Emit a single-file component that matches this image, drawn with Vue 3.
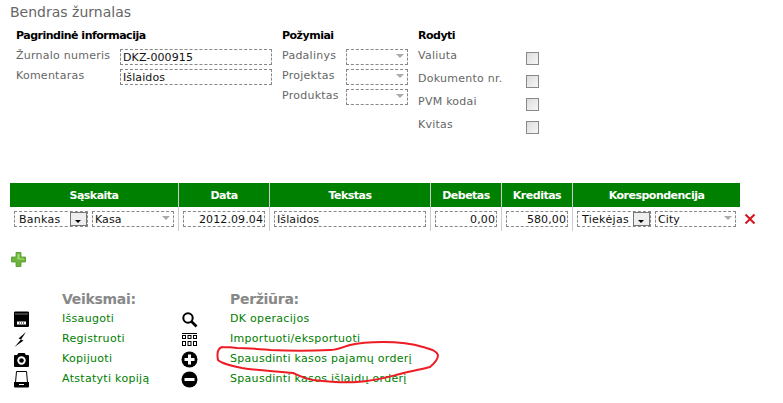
<template>
  <div class="page">
    <h1 class="title">Bendras žurnalas</h1>

    <div class="filters">
      <section class="group main-info">
        <h3>Pagrindinė informacija</h3>
        <div v-for="f in mainFields" :key="f.label" class="field">
          <label>{{ f.label }}</label>
          <div class="inp wide">{{ f.value }}</div>
        </div>
      </section>

      <section class="group attrs">
        <h3>Požymiai</h3>
        <div v-for="a in attrs" :key="a" class="field">
          <label>{{ a }}</label>
          <div class="inp sel"><i class="arrow"></i></div>
        </div>
      </section>

      <section class="group show">
        <h3>Rodyti</h3>
        <div v-for="s in shows" :key="s" class="check-row">
          <label>{{ s }}</label>
          <span class="check"></span>
        </div>
      </section>
    </div>

    <div class="table-wrap">
      <table class="grid">
        <colgroup>
          <col v-for="w in colWidths" :key="w.k" :style="{ width: w.w + 'px' }" />
        </colgroup>
        <thead>
          <tr>
            <th v-for="w in colWidths" :key="w.k">{{ w.k }}</th>
          </tr>
        </thead>
        <tbody>
          <tr>
            <td>
              <div class="pair">
                <div class="inp combo">Bankas<b class="drop"><i></i></b></div>
                <div class="inp sel grow">Kasa<i class="arrow"></i></div>
              </div>
            </td>
            <td><div class="inp num">2012.09.04</div></td>
            <td><div class="inp">Išlaidos</div></td>
            <td><div class="inp num">0,00</div></td>
            <td><div class="inp num">580,00</div></td>
            <td>
              <div class="pair">
                <div class="inp combo">Tiekėjas<b class="drop"><i></i></b></div>
                <div class="inp sel grow">City<i class="arrow"></i></div>
              </div>
            </td>
          </tr>
        </tbody>
      </table>
      <svg class="del" width="12" height="12" viewBox="0 0 12 12">
        <path d="M1.500 1.500 10.500 10.500M10.500 1.500 1.500 10.500" stroke="#d8121f" stroke-width="2" fill="none" />
      </svg>
    </div>

    <svg class="add" width="15" height="15" viewBox="0 0 15 15">
      <path d="M5 0.500h5v4.500h4.500v5H10v4.500H5V10H0.500V5H5z" fill="#6fb33c" stroke="#4f9a2a" stroke-width="0.8" />
      <path d="M6.500 2h2v4.500H13v1H6.500z" fill="#a9dc78" />
    </svg>

    <div class="actions">
      <div></div>
      <h2 class="head">Veiksmai:</h2>
      <div></div>
      <h2 class="head">Peržiūra:</h2>

      <template v-for="(r, i) in rows" :key="i">
        <svg class="ico" width="17" height="17" viewBox="0 0 17 17" v-html="r.leftIcon"></svg>
        <a class="link">{{ r.left }}</a>
        <svg class="ico" width="17" height="17" viewBox="0 0 17 17" v-html="r.rightIcon"></svg>
        <a class="link">{{ r.right }}</a>
      </template>
    </div>

    <svg class="scribble" width="783" height="403" viewBox="0 0 783 403">
      <path d="M222 347C217 349 217 355 218 360C222 364 232 366 242 368C260 371 278 371 293 373C300 376 306 379 313 380C330 382 345 383 357 382C375 381 388 377 400 374C412 371 422 369 430 367C435 363 438 359 438 355C436 350 430 349 423 347C410 343 396 342 383 342C370 342 358 343 350 345C343 347 337 350 330 350C310 351 290 351 270 350C258 349 248 348 237 348C231 347 227 347 222 347" fill="none" stroke="#ee1c25" stroke-width="2" stroke-linecap="round" />
    </svg>
  </div>
</template>

<script setup>
const mainFields = [
  { label: 'Žurnalo numeris', value: 'DKZ-000915' },
  { label: 'Komentaras', value: 'Išlaidos' }
]
const attrs = ['Padalinys', 'Projektas', 'Produktas']
const shows = ['Valiuta', 'Dokumento nr.', 'PVM kodai', 'Kvitas']

const colWidths = [
  { k: 'Sąskaita', w: 169 },
  { k: 'Data', w: 91 },
  { k: 'Tekstas', w: 161 },
  { k: 'Debetas', w: 71 },
  { k: 'Kreditas', w: 71 },
  { k: 'Korespondencija', w: 167 }
]

const icons = {
  save: '<path d="M2 0.500h13a1.500 1.500 0 0 1 1 1.500v13a1 1 0 0 1-1 1H2a1 1 0 0 1-1-1V2a1.500 1.500 0 0 1 1-1.500z" fill="#000"/><rect x="2" y="2.500" width="13" height="1" fill="#777"/><rect x="4" y="10.500" width="9" height="3" fill="#fff"/><path d="M6 11.500h1v1H6zM8 11.500h1v1H8zM10 11.500h1v1h-1z" fill="#000"/>',
  bolt: '<path d="M13 1 5.500 7.500 8 8.500 1.500 16 10.500 9.500 8 8.500z" fill="#000"/>',
  camera: '<path d="M5.500 2h6l1.500 2h2a1 1 0 0 1 1 1v10a1 1 0 0 1-1 1H2a1 1 0 0 1-1-1V5a1 1 0 0 1 1-1h2z" fill="#000"/><circle cx="8.500" cy="9.500" r="4.200" fill="#fff"/><circle cx="8.500" cy="9.500" r="2.300" fill="#000"/>',
  laptop: '<path d="M3.500 0.500h10l1 11h-12z" fill="#fff" stroke="#000" stroke-width="1"/><path d="M1 11h15v4.500a1 1 0 0 1-1 1H2a1 1 0 0 1-1-1z" fill="#000"/><rect x="6" y="13" width="5" height="1" fill="#fff"/>',
  search: '<circle cx="7" cy="7" r="4.700" fill="none" stroke="#000" stroke-width="2"/><path d="M10.500 10.500 15.500 15.500" stroke="#000" stroke-width="2.600"/>',
  grid: '<path d="M1 2h15v1H1z M1 4h4v4H1z M6.500 4h4v4h-4z M12 4h4v4h-4z M1 10h4v5H1z M6.500 10h4v5h-4z M12 10h4v5h-4z" fill="#000"/><path d="M2 5h2v2H2z M7.500 5h2v2h-2z M13 5h2v2h-2z M2 11h2v3H2z M7.500 11h2v3h-2z M13 11h2v3h-2z" fill="#fff"/>',
  plus: '<circle cx="8.500" cy="8.500" r="8" fill="#000"/><path d="M7 3.500h3V7h3.500v3H10v3.500H7V10H3.500V7H7z" fill="#fff"/>',
  minus: '<circle cx="8.500" cy="8.500" r="8" fill="#000"/><rect x="3.500" y="7" width="10" height="3" fill="#fff"/>'
}

const rows = [
  { leftIcon: icons.save, left: 'Išsaugoti', rightIcon: icons.search, right: 'DK operacijos' },
  { leftIcon: icons.bolt, left: 'Registruoti', rightIcon: icons.grid, right: 'Importuoti/eksportuoti' },
  { leftIcon: icons.camera, left: 'Kopijuoti', rightIcon: icons.plus, right: 'Spausdinti kasos pajamų orderį' },
  { leftIcon: icons.laptop, left: 'Atstatyti kopiją', rightIcon: icons.minus, right: 'Spausdinti kasos išlaidų orderį' }
]
</script>

<style scoped>
.page {
  position: relative;
  width: 783px;
  height: 403px;
  overflow: hidden;
  background: #fff;
  font-family: "DejaVu Sans", Verdana, sans-serif;
  font-size: 11px;
  letter-spacing: 0.25px;
  color: #666;
  padding: 3px 0 0 10px;
  box-sizing: border-box;
}

.title {
  margin: 0;
  font-size: 14px;
  font-weight: normal;
  line-height: 18px;
  letter-spacing: 0;
  color: #666;
}

.filters {
  display: flex;
  margin-top: 7px;
  padding-left: 6px;
  height: 155px;
}

.group h3 {
  margin: 0 0 6px;
  font-size: 11px;
  line-height: 15px;
  font-weight: bold;
  letter-spacing: -0.5px;
  color: #000;
}

.main-info { width: 266px; }
.attrs { width: 136px; }

.field {
  display: flex;
  height: 20px;
}

.field label {
  line-height: 14px;
}

.main-info label { width: 104px; }
.attrs label { width: 64px; }

.inp {
  box-sizing: border-box;
  height: 16px;
  border: 1px dashed #888;
  line-height: 16px;
  font-size: 11px;
  letter-spacing: 0.1px;
  color: #111;
  padding: 0 1px 0 2px;
  position: relative;
  white-space: nowrap;
  overflow: hidden;
}

.wide { width: 152px; }
.sel { width: 62px; }

.arrow {
  position: absolute;
  right: 3px;
  top: 4px;
  width: 0;
  height: 0;
  border-left: 4px solid transparent;
  border-right: 4px solid transparent;
  border-top: 4px solid #aaa;
}

.check-row {
  display: flex;
  align-items: flex-start;
  height: 23px;
}

.check-row label {
  width: 108px;
  line-height: 14px;
}

.check {
  box-sizing: border-box;
  width: 13px;
  height: 13px;
  margin-top: 3px;
  border: 1px solid #888;
  background: linear-gradient(135deg, #ddd, #f6f6f6);
}

.table-wrap {
  position: relative;
  width: 745px;
}

.grid {
  table-layout: fixed;
  border-collapse: separate;
  border-spacing: 0;
  width: 730px;
}

.grid th {
  height: 24px;
  padding: 0;
  background: #008000;
  color: #fff;
  font-size: 11px;
  font-weight: bold;
  letter-spacing: -0.5px;
  text-align: center;
  border-right: 1px solid #ccc;
}

.grid th:last-child { border-right: 0; }

.grid td {
  height: 24px;
  padding: 4px;
  box-sizing: border-box;
  vertical-align: top;
  border-right: 1px solid #ccc;
}

.grid td:last-child { border-right: 0; }

.num { text-align: right; }

.pair {
  display: flex;
  gap: 4px;
}

.grow { flex: 1; width: auto; }

.combo {
  flex: none;
  width: 74px;
  padding-left: 4px;
  letter-spacing: 0.25px;
}

.drop {
  position: absolute;
  right: 0;
  top: 0;
  box-sizing: border-box;
  width: 17px;
  height: 14px;
  border: 1px solid #777;
  background: #eee;
}

.drop i {
  position: absolute;
  left: 4px;
  top: 7px;
  border-left: 3px solid transparent;
  border-right: 3px solid transparent;
  border-top: 3px solid #000;
}

.del {
  position: absolute;
  left: 734px;
  top: 30px;
}

.add {
  display: block;
  margin: 21px 0 0 1px;
}

.actions {
  display: grid;
  grid-template-columns: 49px 119px 49px auto;
  grid-auto-rows: 20px;
  margin-top: 22px;
  margin-left: 3px;
  align-items: center;
}

.head {
  margin: 0;
  font-size: 14px;
  font-weight: bold;
  line-height: 18px;
  letter-spacing: -0.3px;
  color: #888;
}

.ico { display: block; }

.link {
  color: #008000;
  font-size: 11px;
  line-height: 14px;
  letter-spacing: 0.3px;
  white-space: nowrap;
}

.scribble {
  position: absolute;
  left: 0;
  top: 0;
  pointer-events: none;
}
</style>
